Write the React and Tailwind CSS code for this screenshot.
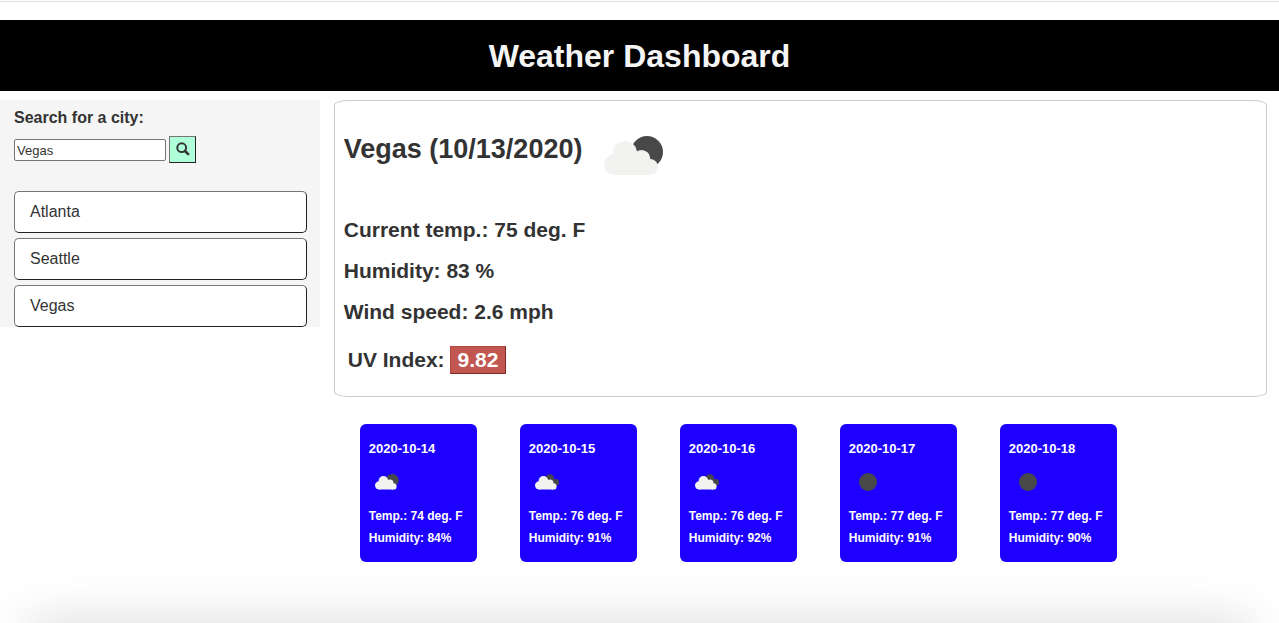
import React from "react";

const history = ["Atlanta", "Seattle", "Vegas"];

const forecast = [
  { date: "2020-10-14", icon: "few", temp: 74, humidity: 84 },
  { date: "2020-10-15", icon: "broken", temp: 76, humidity: 91 },
  { date: "2020-10-16", icon: "broken", temp: 76, humidity: 92 },
  { date: "2020-10-17", icon: "clear", temp: 77, humidity: 91 },
  { date: "2020-10-18", icon: "clear", temp: 77, humidity: 90 },
];

function WeatherIcon({ kind, className }) {
  if (kind === "clear") {
    return (
      <svg viewBox="0 0 60 40" className={className} aria-hidden="true">
        <circle cx="29" cy="20" r="20" fill="#484849" />
      </svg>
    );
  }
  return (
    <svg viewBox="0 0 60 40" className={className} aria-hidden="true">
      {kind === "few" ? (
        <circle cx="43" cy="16" r="16" fill="#484849" />
      ) : (
        <g fill="#484849">
          <circle cx="37" cy="11" r="10.5" />
          <circle cx="52" cy="21" r="8.5" />
          <path d="M40 5 L48 12 L56 26 L40 28 Z" />
        </g>
      )}
      <g fill="#f2f2f0">
        <circle cx="10.5" cy="28.5" r="10.5" />
        <circle cx="21" cy="17" r="12" />
        <circle cx="37.5" cy="22.8" r="8.8" />
        <circle cx="46" cy="31" r="8" />
        <path d="M10.5 20 H38 L46 30 V39 H10.5 Z" />
      </g>
    </svg>
  );
}

function SearchIcon() {
  return (
    <svg viewBox="0 0 14 14" className="h-[14px] w-[14px]" fill="none" stroke="#333" aria-hidden="true">
      <circle cx="5.7" cy="5.7" r="4.4" strokeWidth="2" />
      <path d="M9 9 L12.2 12.2" strokeWidth="2.6" strokeLinecap="round" />
    </svg>
  );
}

export default function App() {
  return (
    <div className="relative min-h-screen overflow-hidden bg-white pt-px font-['Liberation_Sans',Arial,sans-serif] text-[#333]">
      <div className="h-[19px] border-t border-[#ddd]" />
      <header className="bg-black pt-[17px] pb-[15px] text-center">
        <h1 className="text-[32px] leading-[39px] font-bold text-[#f5f5f5]">Weather Dashboard</h1>
      </header>
      <div className="mt-[9px] flex items-start">
        <aside className="w-1/4 bg-[#f5f5f5] pr-[13px] pl-[14px]">
          <form className="pt-2" onSubmit={(e) => e.preventDefault()}>
            <label htmlFor="city" className="block text-[16px] leading-5 font-bold">
              Search for a city:
            </label>
            <div className="mt-2 flex items-center gap-[3px]">
              <input
                id="city"
                type="text"
                defaultValue="Vegas"
                className="h-[22px] w-[152px] rounded-xs border border-[#767676] bg-white px-[2px] pt-[2px] text-[13px]"
              />
              <button
                type="submit"
                aria-label="Search"
                className="flex h-[27px] w-[27px] items-center justify-center border border-t-[#767676] border-r-[#222] border-b-[#222] border-l-[#767676] bg-[#afffd8] pb-[2px]"
              >
                <SearchIcon />
              </button>
            </div>
          </form>
          <div className="mt-7 flex flex-col gap-[5px]">
            {history.map((city) => (
              <button
                key={city}
                type="button"
                className="h-[42px] rounded-[5px] border border-t-[#767676] border-r-[#222] border-b-[#222] border-l-[#767676] bg-white px-[15px] text-left text-[16px]"
              >
                {city}
              </button>
            ))}
          </div>
        </aside>
        <main className="w-3/4 pr-3 pl-[14px]">
          <section className="rounded-[15px/5px] border border-[#ccc] px-[9px] pt-[35px] pb-[22px]">
            <div className="flex items-start gap-[22px]">
              <h2 className="text-[27px] leading-[27px] font-bold">Vegas (10/13/2020)</h2>
              <WeatherIcon kind="few" className="h-10 w-[60px]" />
            </div>
            <div className="mt-[41px] flex flex-col gap-4 text-[21px] leading-[25px] font-bold">
              <p>Current temp.: 75 deg. F</p>
              <p>Humidity: 83 %</p>
              <p>Wind speed: 2.6 mph</p>
            </div>
            <div className="mt-[22px] flex items-center gap-[5px] pl-1 text-[21px] leading-[26px] font-bold">
              <span>UV Index:</span>
              <span className="border border-t-[#b5443e] border-r-[#7d2a26] border-b-[#7d2a26] border-l-[#b5443e] bg-[#c15750] px-[7px] text-white">
                9.82
              </span>
            </div>
          </section>
          <section className="mt-[27px] flex flex-wrap gap-[43px] pl-[26px]">
            {forecast.map((day) => (
              <article
                key={day.date}
                className="w-[117px] rounded-md bg-[#1e00ff] px-[9px] pt-[17px] pb-4 text-[12px] leading-4 font-bold whitespace-nowrap text-white"
              >
                <h3 className="text-[13px] leading-4">{day.date}</h3>
                <div className="mt-4 flex h-[18px] items-center pl-[6px]">
                  <WeatherIcon kind={day.icon} className={day.icon === "clear" ? "h-[18px] w-[27px]" : "h-4 w-6"} />
                </div>
                <p className="mt-[17px]">Temp.: {day.temp} deg. F</p>
                <p className="mt-[6px]">Humidity: {day.humidity}%</p>
              </article>
            ))}
          </section>
        </main>
      </div>
      <div className="pointer-events-none absolute inset-x-7 -bottom-10 h-10 shadow-[0_0_50px_rgba(0,0,0,0.16)]" />
    </div>
  );
}
